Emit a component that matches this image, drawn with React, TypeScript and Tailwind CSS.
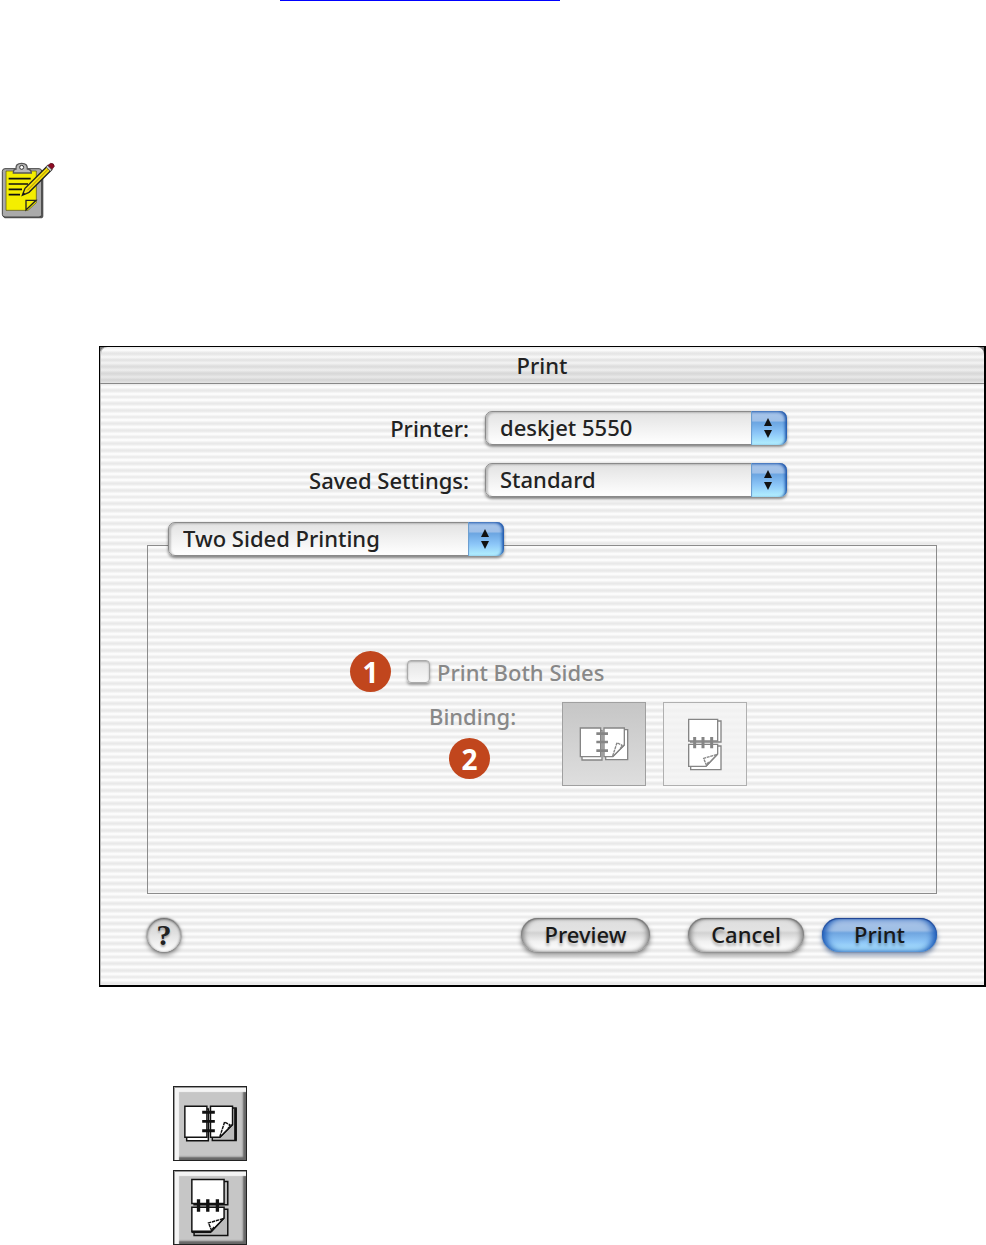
import { useState } from "react";
import type { ReactNode } from "react";

const PRINTERS = ["deskjet 5550"];
const PRESETS = ["Standard"];
const PANELS = ["Two Sided Printing"];

function ClipboardIcon() {
    return (
        <svg viewBox="0 0 192 210" className="block h-[70px] w-[64px]" aria-hidden="true">
            <rect x="10" y="44" width="120" height="146" rx="8" fill="#555" />
            <rect x="7" y="41" width="118" height="145" rx="8" fill="#aaa" stroke="#444" strokeWidth="3" />
            <path d="M18 48H109V143L84 166H18Z" fill="#f4ee00" stroke="#55510a" strokeWidth="2" />
            <path d="M78 165V136H108Z" fill="#f4ee00" stroke="#222" strokeWidth="4" />
            <path d="M40 54Q40 42 48 42Q46 25 65 25Q83 25 82 42Q94 43 94 54Z" fill="#b8b8b8" stroke="#555" strokeWidth="4" />
            <circle cx="65" cy="37" r="6" fill="#fff" stroke="#333" strokeWidth="3" />
            <path d="M26 71H92M26 87H84M26 103H66M26 119H60" stroke="#111" strokeWidth="5" />
            <path d="M67 121L75 100L143 32L155 44L87 112Z" fill="#f4e20a" stroke="#222" strokeWidth="4" />
            <path d="M82 106L148 39" stroke="#b08c00" strokeWidth="3" />
            <path d="M138 36L143 31L156 44L151 49Z" fill="#ccc" stroke="#444" strokeWidth="2" />
            <path d="M144 31L152 25Q162 24 163 34L156 43Z" fill="#8e0a22" stroke="#4d0715" strokeWidth="2" />
            <path d="M67 121L70 112L76 117Z" fill="#111" />
        </svg>
    );
}

type BookProps = { ink: string; fold: string; shaded?: boolean; className: string };

function SideBindingIcon({ ink, fold, shaded, className }: BookProps) {
    return (
        <svg viewBox="85 108 150 108" className={className} aria-hidden="true">
            <g fill="#fff" stroke={ink} strokeWidth="4">
                <path d="M94 122H154V210H94Z" />
                <path d="M165 119H231V209H165Z" fill={fold} />
                {shaded && <path d="M229 120V208" strokeWidth="7" />}
                <path d="M89 114H150V200H89Z" />
                <path d="M160 114H221V165L186 200H160Z" />
                <path d="M186 198L199 158L214 166L209 174" strokeWidth="4" strokeDasharray="9 2" />
                <path d="M186 200L221 165" strokeWidth="4" />
            </g>
            <path d="M137 131H172M137 156H172M137 182H172" stroke={ink} strokeWidth="8" />
        </svg>
    );
}

function TopBindingIcon({ ink, fold, shaded, className }: BookProps) {
    return (
        <svg viewBox="410 80 108 159" className={className} aria-hidden="true">
            <g fill="#fff" stroke={ink} strokeWidth="4">
                <path d="M421 89H512V152H421Z" fill={fold} />
                <path d="M421 164H512V235H421Z" fill={fold} />
                <path d="M415 84H502V149H415Z" />
                <path d="M415 159H502V188L467 225H415Z" />
                {shaded && <path d="M415 225H467" strokeWidth="7" />}
                <path d="M499 190L460 201L468 221L475 212" strokeWidth="4" strokeDasharray="9 2" />
                <path d="M467 225L502 188" strokeWidth="4" />
            </g>
            <path d="M433 137V171M458 137V171M484 137V171" stroke={ink} strokeWidth="9" />
        </svg>
    );
}

type PopupProps = { id: string; label?: string; options: string[]; className?: string };

function PopupMenu({ id, label, options, className = "" }: PopupProps) {
    const [value, setValue] = useState(options[0]);

    return (
        <div className={`relative h-[34px] rounded-[7px] shadow-[0_2px_3px_rgba(0,0,0,0.45)] ${className}`}>
            <select
                id={id}
                aria-label={label}
                value={value}
                onChange={(e) => setValue(e.target.value)}
                className="block h-full w-full appearance-none rounded-[7px] border border-[#8a8a8a] bg-linear-to-b from-[#e2e2e2] via-[#f1f1f1] to-white pr-10 pb-[2px] pl-[14px] text-[22px] leading-[30px] font-medium text-[#222] shadow-[inset_2px_1px_2px_rgba(0,0,0,0.2)]"
            >
                {options.map((option) => (
                    <option key={option}>{option}</option>
                ))}
            </select>
            <span className="pointer-events-none absolute inset-y-0 right-0 flex w-9 items-center justify-center rounded-r-[7px] border-l border-[#6d9fd0] bg-[linear-gradient(#a9c6ea_0%,#9fc0e8_28%,#6ca6e2_34%,#8cc6f8_65%,#b5f2ff_100%)] pr-1 shadow-[inset_-2px_1px_3px_#1c55ab]">
                <svg viewBox="0 0 10 20" className="h-5 w-[10px]" aria-hidden="true">
                    <path d="M5 0L9 8H1ZM5 20L1 12H9Z" fill="#111" />
                </svg>
            </span>
        </div>
    );
}

function StepBadge({ children, className = "" }: { children: ReactNode; className?: string }) {
    return (
        <span className={`flex size-[41px] shrink-0 items-center justify-center rounded-full bg-[#c1461d] font-['Open_Sans',sans-serif] text-[28px] leading-none font-bold text-white ${className}`}>
            {children}
        </span>
    );
}

function PushButton({ children, primary, className = "" }: { children: ReactNode; primary?: boolean; className?: string }) {
    return (
        <button
            type="button"
            className={`h-[34px] rounded-full pb-[2px] text-[22px] leading-[30px] font-medium text-[#181818] [text-shadow:0_3px_3px_rgba(0,0,0,0.3)] ${primary
                ? "bg-[linear-gradient(#a9c3e6_0%,#9fbfe6_36%,#6fa5e0_44%,#8cc4f6_70%,#b4ebff_100%)] shadow-[inset_0_1px_1px_#1b3f8f,inset_5px_0_6px_-1px_#1e5cb8,inset_-5px_0_6px_-1px_#1e5cb8,0_0_1px_#23406e,0_3px_5px_rgba(40,70,120,0.6)]"
                : "bg-[linear-gradient(#dedede_0%,#e2e2e2_36%,#d2d2d2_44%,#f2f2f2_70%,#ffffff_100%)] shadow-[inset_0_1px_2px_#666,inset_4px_0_5px_-1px_#888,inset_-4px_0_5px_-1px_#888,0_0_1px_#666,0_3px_5px_rgba(0,0,0,0.45)]"
                } ${className}`}
        >
            {children}
        </button>
    );
}

function PrintDialog() {
    const [binding, setBinding] = useState("side");

    return (
        <section className="ml-[99px] border-t border-r-2 border-b-2 border-l border-black bg-[#777] font-['Noto_Sans','Open_Sans',sans-serif] text-[22px] leading-7 font-medium text-[#222]">
            <header className="rounded-t-[7px] border-b border-[#888] bg-[linear-gradient(transparent,rgba(0,0,0,0.1)),linear-gradient(#fff_0px,#eaeaea_3px,#eaeaea_4px,#fff_7px,#eaeaea_10px,#fff_13px,#eaeaea_16px,#eaeaea_17px,#fff_20px)] bg-[length:100%_100%,100%_20px] bg-[position:0_0,0_3px] text-center shadow-[inset_1px_0_0_#bbb]">
                <h1 className="h-9 leading-9">Print</h1>
            </header>

            <div className="bg-[linear-gradient(#fff_0px,#e9e9e9_3px,#e9e9e9_4px,#fff_7px,#e9e9e9_10px,#fff_13px,#e9e9e9_16px,#e9e9e9_17px,#fff_20px)] bg-[length:100%_20px] bg-[position:0_3px] px-[47px] pt-[27px] pb-[33px] shadow-[inset_1px_0_0_#bbb]">
                <div className="grid grid-cols-[322px_minmax(0,302px)] items-center gap-x-[16px] gap-y-[18px]">
                    <label htmlFor="printer" className="text-right">Printer:</label>
                    <PopupMenu id="printer" options={PRINTERS} />
                    <label htmlFor="preset" className="text-right">Saved Settings:</label>
                    <PopupMenu id="preset" options={PRESETS} />
                </div>

                <div className="mt-12 border border-[#8c8c8c] pb-[107px]">
                    <PopupMenu id="panel" label="Options" options={PANELS} className="-mt-6 ml-5 max-w-[336px]" />

                    <div className="mt-[95px] ml-[202px] flex items-center">
                        <StepBadge>1</StepBadge>
                        <label className="ml-4 flex items-center gap-[7px] text-[#888]">
                            <input
                                type="checkbox"
                                disabled
                                className="size-[23px] appearance-none rounded-[4px] border border-[#aaa] bg-linear-to-b from-[#e4e4e4] to-[#f8f8f8] shadow-[inset_0_1px_2px_#aaa,0_2px_3px_rgba(0,0,0,0.35)]"
                            />
                            Print Both Sides
                        </label>
                    </div>

                    <div className="mt-[10px] ml-[281px] flex">
                        <div className="w-[133px]">
                            <div className="text-[#888]">Binding:</div>
                            <StepBadge className="mt-2 ml-5">2</StepBadge>
                        </div>
                        <div className="flex gap-[17px]">
                            <button
                                type="button"
                                aria-label="Side binding"
                                aria-pressed={binding === "side"}
                                onClick={() => setBinding("side")}
                                className="flex size-[84px] items-center justify-center border border-[#a0a0a0] bg-linear-to-b from-[#c6c6c6] to-[#dedede]"
                            >
                                <SideBindingIcon ink="#858585" fold="#fff" className="h-9 w-[50px]" />
                            </button>
                            <button
                                type="button"
                                aria-label="Top binding"
                                aria-pressed={binding === "top"}
                                onClick={() => setBinding("top")}
                                className="flex size-[84px] items-center justify-center border border-[#b0b0b0] bg-[#f3f3f3]/80"
                            >
                                <TopBindingIcon ink="#858585" fold="#fff" className="h-[53px] w-9" />
                            </button>
                        </div>
                    </div>
                </div>

                <footer className="mt-6 flex items-center">
                    <button
                        type="button"
                        className="size-[34px] rounded-full bg-[linear-gradient(#d0d0d0,#e0e0e0_45%,#ffffff)] font-['Liberation_Serif',serif] text-[30px] leading-[34px] font-bold text-[#222] shadow-[inset_0_1px_3px_#444,0_0_2px_#555,0_3px_5px_rgba(0,0,0,0.45)] [text-shadow:0_2px_2px_rgba(0,0,0,0.3)]"
                    >
                        ?
                    </button>
                    <PushButton className="ml-auto w-[129px]">Preview</PushButton>
                    <PushButton className="ml-[38px] w-[116px]">Cancel</PushButton>
                    <PushButton primary className="ml-[18px] w-[115px]">Print</PushButton>
                </footer>
            </div>
        </section>
    );
}

function BevelTile({ children }: { children: ReactNode }) {
    return (
        <div className="flex h-[75px] w-[74px] items-center justify-center border border-[#222] bg-[#c6c6c6] shadow-[inset_1px_1px_0_#999,inset_5px_5px_1px_#f4f4f4,inset_-3px_-3px_2px_#666]">
            {children}
        </div>
    );
}

export default function App() {
    return (
        <main className="bg-white">
            <a href="#top" aria-label="Back to top" className="ml-[280px] block w-[280px] border-b border-[#0000ff]" />

            <div className="mt-[154px] mb-[121px]">
                <ClipboardIcon />
            </div>

            <PrintDialog />

            <div className="mt-[99px] ml-[173px] flex flex-col gap-[9px]">
                <BevelTile>
                    <SideBindingIcon ink="#111" fold="#bbb" shaded className="h-[39px] w-[55px]" />
                </BevelTile>
                <BevelTile>
                    <TopBindingIcon ink="#111" fold="#bbb" shaded className="h-[59px] w-10" />
                </BevelTile>
            </div>
        </main>
    );
}
